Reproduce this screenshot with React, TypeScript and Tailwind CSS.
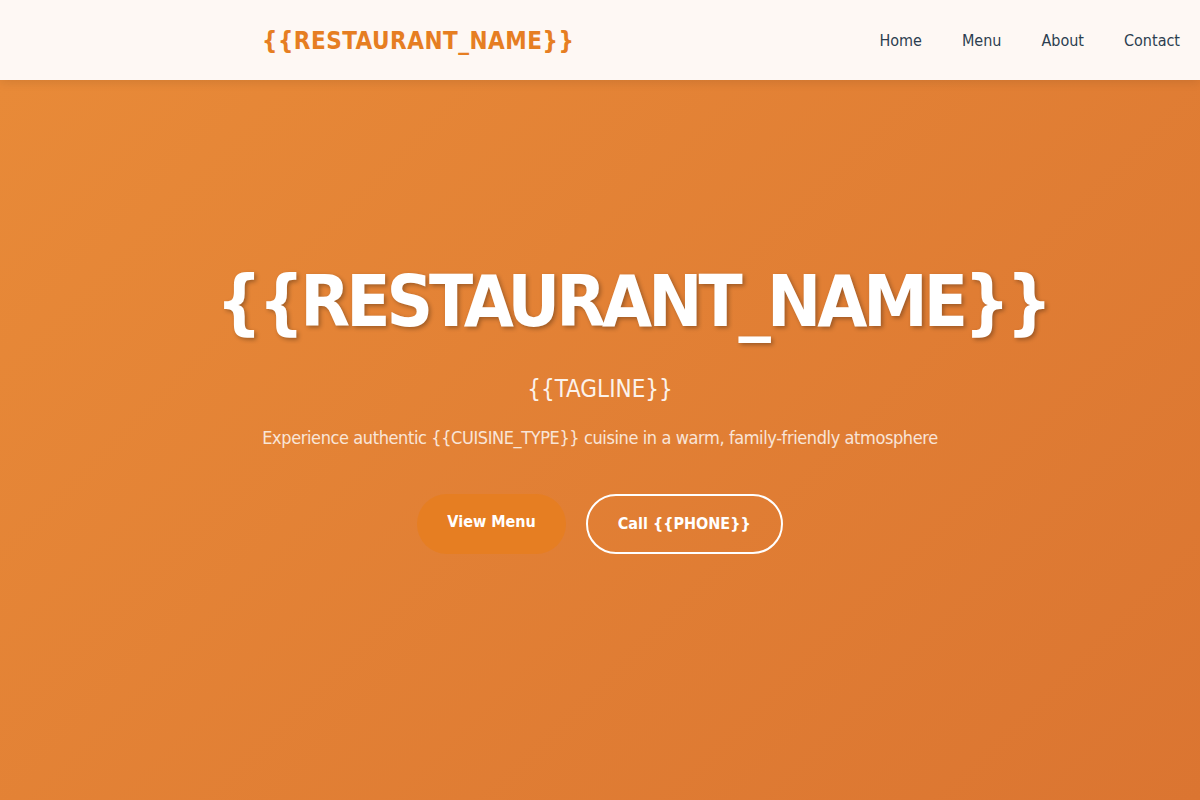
export default function App() {
  return (
    <div className="min-h-screen font-['DejaVu_Sans_Condensed','DejaVu_Sans',sans-serif]">
      <header className="h-20 bg-[#fef8f4] shadow-[0_2px_10px_rgba(0,0,0,0.1)] relative z-10 flex items-center justify-between pl-[262px] pr-5">
        <div className="text-[24px] font-bold text-[#e67e22] tracking-[0.5px] pt-0.5">{'{{RESTAURANT_NAME}}'}</div>
        <nav className="flex gap-10 text-[16px] text-[#2c3e50] pt-0.5">
          <a href="#">Home</a>
          <a href="#">Menu</a>
          <a href="#">About</a>
          <a href="#">Contact</a>
        </nav>
      </header>
      <section className="h-[720px] bg-[linear-gradient(135deg,#e88a38_0%,#db7531_100%)] text-white">
        <div className="max-w-[800px] mx-auto px-5 pt-[178px] text-center">
          <h1 className="text-[72px] leading-[1.2] font-bold whitespace-nowrap tracking-[-4px] -ml-1 [text-shadow:2px_2px_4px_rgba(0,0,0,0.3)]">
            {'{{RESTAURANT_NAME}}'}
          </h1>
          <p className="mt-[27px] text-[24px] opacity-90">{'{{TAGLINE}}'}</p>
          <p className="mt-[17px] text-[18px] tracking-[-0.4px] opacity-80">
            Experience authentic {'{{CUISINE_TYPE}}'} cuisine in a warm, family-friendly atmosphere
          </p>
          <div className="mt-[43px] flex justify-center gap-5">
            <a href="#" className="px-[30px] py-4 rounded-full bg-[#e67e22] font-bold text-[16px]">View Menu</a>
            <a href="#" className="px-[30px] py-4 rounded-full border-2 border-white font-bold text-[16px]">Call {'{{PHONE}}'}</a>
          </div>
        </div>
      </section>
    </div>
  );
}
